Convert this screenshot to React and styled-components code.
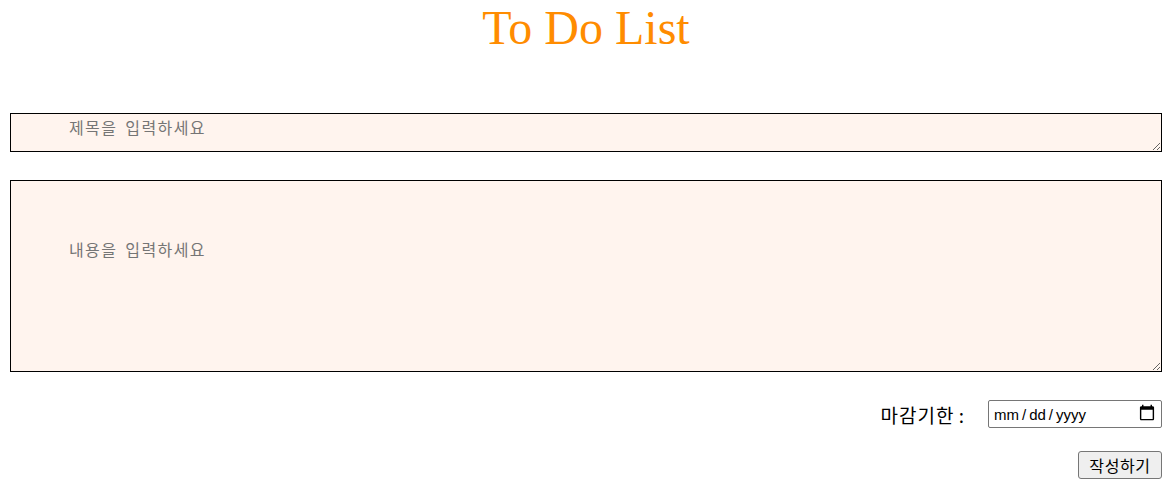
import React, { useState } from 'react';
import styled, { createGlobalStyle } from 'styled-components';

const GlobalStyle = createGlobalStyle`
    body {
        margin: 0;
        background: #ffffff;
    }
`;

const Page = styled.div`
    display: flex;
    flex-direction: column;
    padding: 1px 14px 0 10px;
`;

const Title = styled.h1`
    margin: 0 0 59px;
    text-align: center;
    font-family: "Liberation Serif", "Times New Roman", serif;
    font-weight: normal;
    font-size: 48px;
    line-height: 53px;
    color: #ff8c00;
`;

const TextBox = styled.textarea`
    box-sizing: border-box;
    width: 100%;
    height: ${props => props.tall ? '192px' : '39px'};
    margin: 0 0 28px;
    padding: ${props => props.tall ? '57px 58px' : '2px 58px'};
    border: 1px solid #000;
    background: #fff4ee;
    font-family: "Noto Sans CJK KR", "Noto Sans", sans-serif;
    font-size: 16px;
    line-height: 23px;
    letter-spacing: 1.4px;
    word-spacing: 3px;
    color: #000;
    outline: none;

    &::placeholder {
        color: #757575;
    }
`;

const Row = styled.div`
    display: flex;
    justify-content: flex-end;
    align-items: center;
    gap: ${props => props.gap || 0}px;
`;

const Label = styled.label`
    font-family: "Noto Sans CJK KR", "Noto Sans", sans-serif;
    font-size: 19px;
    letter-spacing: 1px;
    word-spacing: -1px;
    color: #000;
`;

const DateInput = styled.input`
    box-sizing: border-box;
    width: 174px;
    height: 28px;
    padding: 1px 5px 1px 4px;
    border: 1px solid #767676;
    border-radius: 2px;
    font-family: "Liberation Sans", Arial, sans-serif;
    font-size: 15px;
    color: #000;
    background: #fff;

    &::-webkit-datetime-edit-text {
        padding: 0 2px;
    }

    &::-webkit-calendar-picker-indicator {
        width: 18px;
        height: 20px;
        padding: 0;
        margin: 0;
        background-size: contain;
    }
`;

const SubmitButton = styled.button`
    box-sizing: border-box;
    width: 84px;
    height: 28px;
    margin-top: 23px;
    padding: 0;
    border: 1px solid #767676;
    border-radius: 3px;
    background: #efefef;
    font-family: "Noto Sans CJK KR", "Noto Sans", sans-serif;
    font-size: 16px;
    letter-spacing: 0.6px;
    color: #000;
    cursor: pointer;
`;

const App = () => {
    const [title, setTitle] = useState("");
    const [content, setContent] = useState("");
    const [due, setDue] = useState("");

    return (
        <>
            <GlobalStyle />
            <Page>
                <Title>To Do List</Title>
                <TextBox
                    placeholder="제목을 입력하세요"
                    value={title}
                    onChange={(e) => setTitle(e.target.value)}
                />
                <TextBox
                    tall
                    placeholder="내용을 입력하세요"
                    value={content}
                    onChange={(e) => setContent(e.target.value)}
                />
                <Row gap={23}>
                    <Label htmlFor="due">마감기한 :</Label>
                    <DateInput
                        id="due"
                        type="date"
                        value={due}
                        onChange={(e) => setDue(e.target.value)}
                    />
                </Row>
                <Row>
                    <SubmitButton>작성하기</SubmitButton>
                </Row>
            </Page>
        </>
    );
};

export default App;
